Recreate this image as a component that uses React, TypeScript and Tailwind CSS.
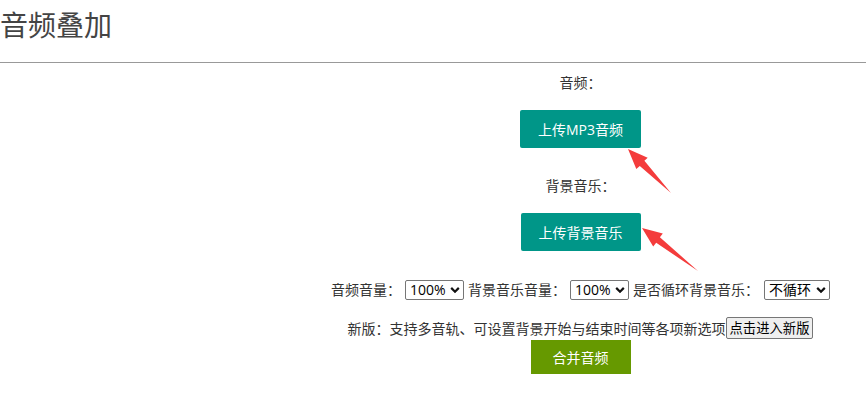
import React from "react";

const font = "font-['Open_Sans','Noto_Sans_CJK_SC',sans-serif]";

const Chevron = () => (
  <svg
    className="pointer-events-none absolute right-[4px] top-1/2 -translate-y-1/2"
    width="10"
    height="7"
    viewBox="0 0 10 7"
  >
    <path d="M1.2 1.4 L5 5.2 L8.8 1.4" fill="none" stroke="#111" strokeWidth="2.2" />
  </svg>
);

const Select = ({ value, options, width }: { value: string; options: string[]; width: string }) => {
  const [v, setV] = React.useState(value);
  return (
    <span className={"relative inline-block align-middle " + width}>
      <select
        value={v}
        onChange={(e) => setV(e.target.value)}
        className="block h-[20px] w-full appearance-none rounded-[2px] border border-[#767676] bg-white pl-[4px] pr-[14px] text-left font-['Open_Sans','Noto_Sans_CJK_SC',sans-serif] text-[14px] leading-[18px] text-black outline-none"
      >
        {options.map((o) => (
          <option key={o}>{o}</option>
        ))}
      </select>
      <Chevron />
    </span>
  );
};

const Arrows = () => (
  <svg className="pointer-events-none absolute left-0 top-0" width="866" height="396">
    <polygon
      fill="#f43c3c"
      points="628,149 636.3,169 639.8,165.9 671,193 644.4,160.7 647.7,157.7"
    />
    <polygon
      fill="#f43c3c"
      points="642,228 653.2,246.6 656.2,242.8 698,271 659.9,237.3 662.8,233.6"
    />
  </svg>
);

export default function App() {
  const vols = ["100%", "90%", "80%", "70%", "60%", "50%"];
  return (
    <div className={"relative min-h-screen w-full bg-white text-[#333] " + font}>
      <div className="h-[62px] pt-[9px]">
        <h1 className="text-[28px] leading-[32px] font-normal text-[#444]">音频叠加</h1>
      </div>
      <div className="h-px bg-[#999]" />

      <div className="flex">
        <div className="w-[295px] shrink-0" />
        <div className="flex-1 text-center text-[14px]">
          <p className="mt-[10px] leading-[20px]">音频：</p>
          <div className="mt-[17px]">
            <button className="h-[38px] w-[121px] rounded-[2px] bg-[#009688] text-[14px] text-white">
              上传MP3音频
            </button>
          </div>
          <p className="mt-[28px] leading-[20px]">背景音乐：</p>
          <div className="mt-[17px]">
            <button className="h-[38px] w-[120px] rounded-[2px] bg-[#009688] text-[14px] text-white">
              上传背景音乐
            </button>
          </div>

          <div className="mt-[28px] flex h-[20px] items-center justify-center whitespace-nowrap">
            <span>音频音量：</span>
            <span className="ml-[4px]">
              <Select value="100%" options={vols} width="w-[59px]" />
            </span>
            <span className="ml-[4px]">背景音乐音量：</span>
            <span className="ml-[4px]">
              <Select value="100%" options={vols} width="w-[59px]" />
            </span>
            <span className="ml-[4px]">是否循环背景音乐：</span>
            <span className="ml-[5px]">
              <Select value="不循环" options={["不循环", "循环"]} width="w-[66px]" />
            </span>
          </div>

          <div className="mt-[18px] flex h-[22px] items-center justify-center whitespace-nowrap">
            <span>新版：支持多音轨、可设置背景开始与结束时间等各项新选项</span>
            <button className="h-[22px] rounded-[2px] border border-[#767676] bg-[#efefef] px-[3px] text-[13.33px] leading-[20px] text-black">
              点击进入新版
            </button>
          </div>

          <div className="mt-px">
            <button className="h-[34px] w-[100px] bg-[#669900] text-[14px] text-white">合并音频</button>
          </div>
        </div>
      </div>

      <Arrows />
    </div>
  );
}
